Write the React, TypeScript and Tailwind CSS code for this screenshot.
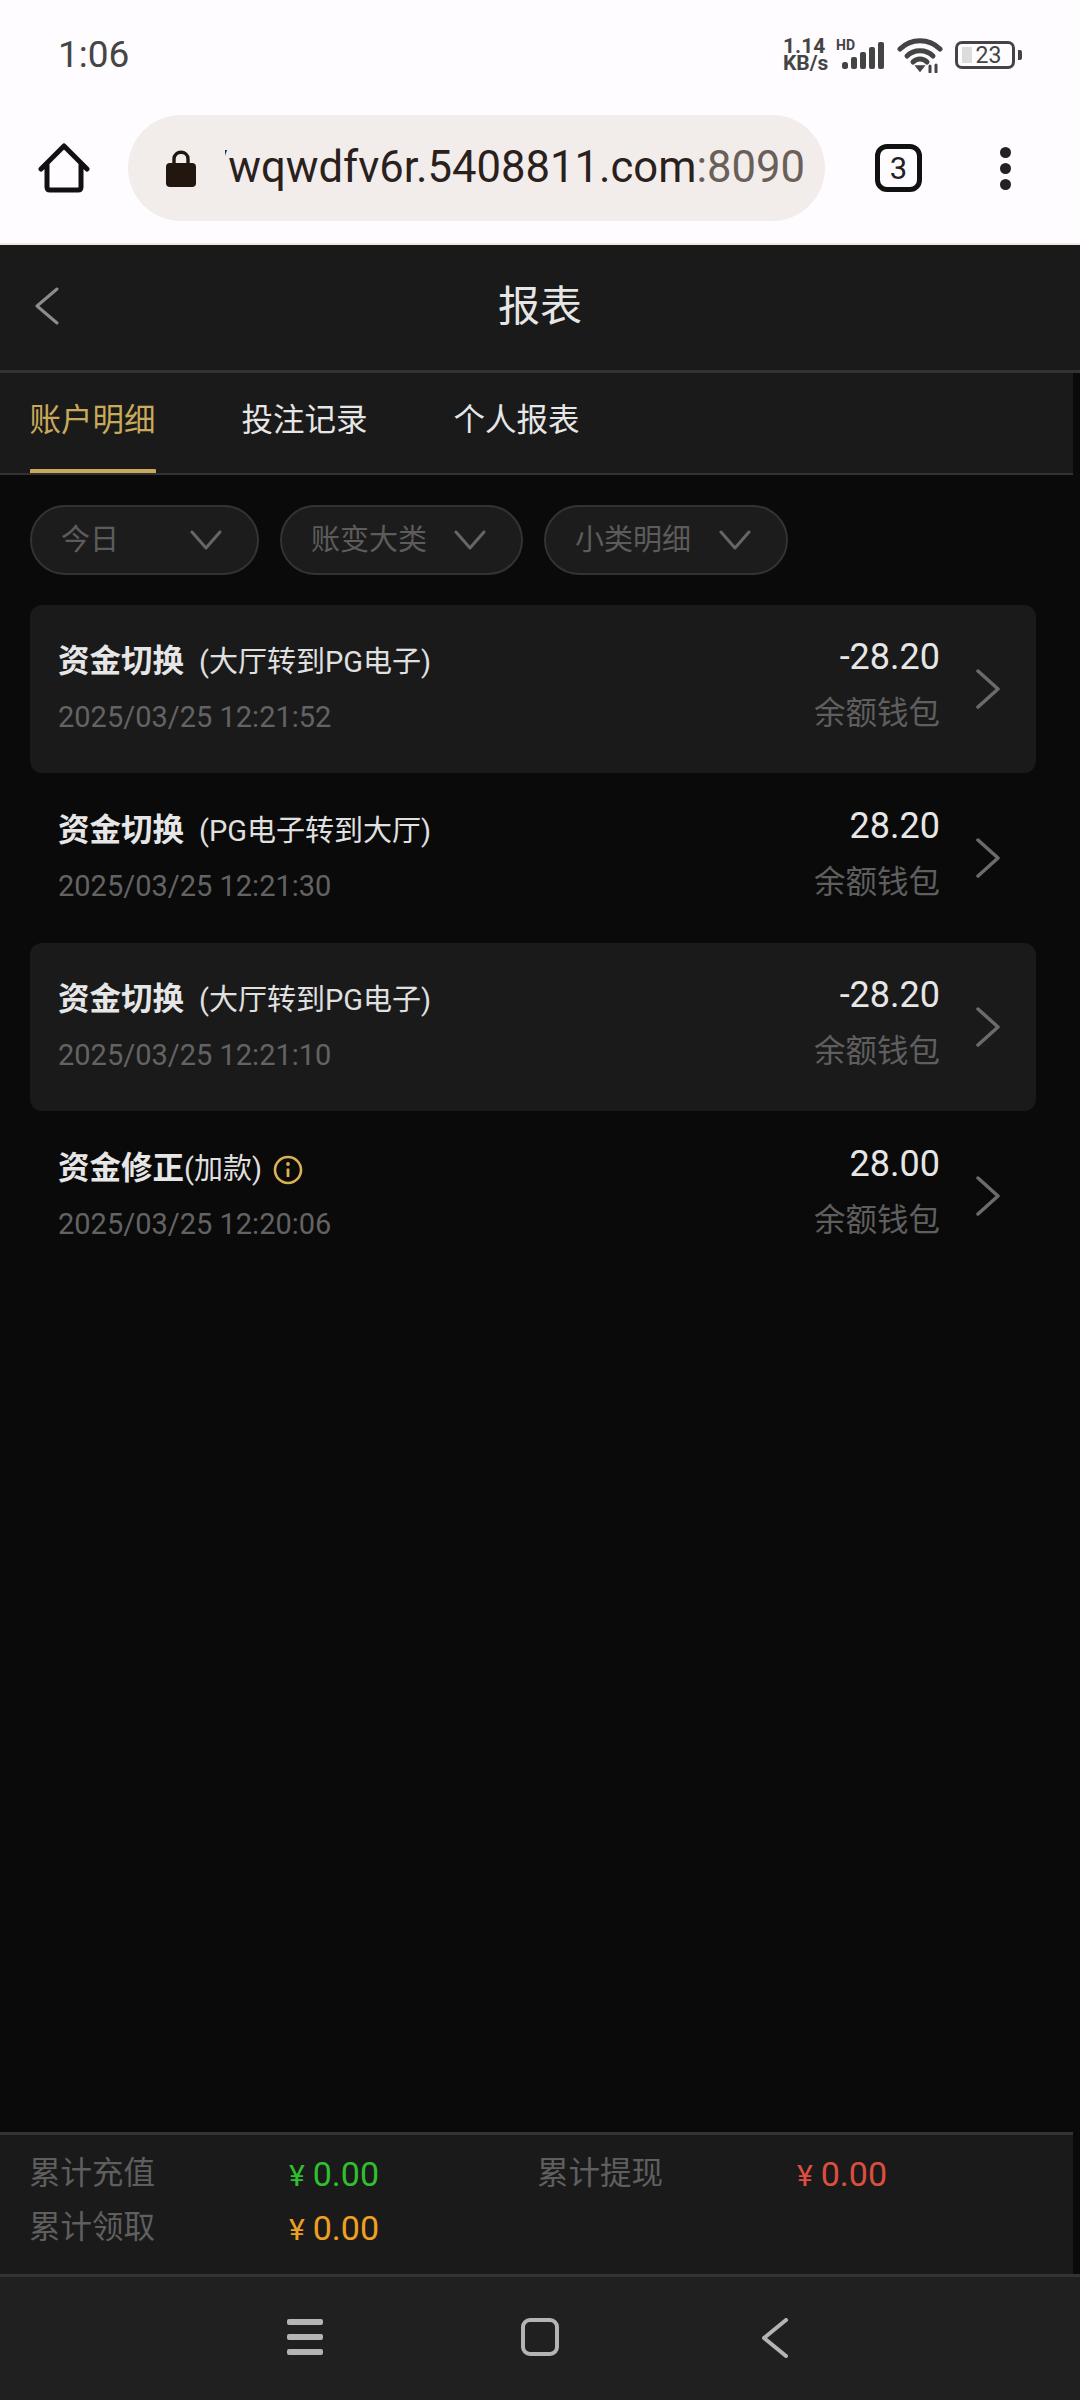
import React from "react";

const rows = [
  { t: "资金切换", s: "(大厅转到PG电子)", d: "2025/03/25 12:21:52", a: "-28.20", card: true },
  { t: "资金切换", s: "(PG电子转到大厅)", d: "2025/03/25 12:21:30", a: "28.20", card: false },
  { t: "资金切换", s: "(大厅转到PG电子)", d: "2025/03/25 12:21:10", a: "-28.20", card: true },
  { t: "资金修正", s: "(加款)", d: "2025/03/25 12:20:06", a: "28.00", card: false, info: true },
];

function Chevron({ w = 22, h = 38, dir = "right", color = "#666", sw = 3 }: { w?: number; h?: number; dir?: string; color?: string; sw?: number }) {
  const d = dir === "right" ? `M2 2 L${w - 2} ${h / 2} L2 ${h - 2}` : `M${w - 2} 2 L2 ${h / 2} L${w - 2} ${h - 2}`;
  return (
    <svg width={w} height={h} viewBox={`0 0 ${w} ${h}`} fill="none">
      <path d={d} stroke={color} strokeWidth={sw} strokeLinecap="round" strokeLinejoin="round" />
    </svg>
  );
}

function Filter({ label, w }: { label: string; w: string }) {
  return (
    <div className={`flex h-[70px] items-center justify-between rounded-[35px] border-2 border-[#333] bg-[#1c1c1c] pl-[29px] pr-[35px] ${w}`}>
      <span className="text-[29px] leading-none text-[#5c5c5c]">{label}</span>
      <svg width="32" height="20" viewBox="0 0 32 20" fill="none">
        <path d="M2 2 L16 18 L30 2" stroke="#666" strokeWidth="3" strokeLinecap="round" strokeLinejoin="round" />
      </svg>
    </div>
  );
}

function Row({ r }: { r: (typeof rows)[number] }) {
  return (
    <div className={`flex h-[168px] items-center rounded-[12px] pl-[28px] pr-[36px] ${r.card ? "bg-[#1a1a1a]" : ""}`}>
      <div className="flex flex-1 flex-col gap-[23px]">
        <div className="flex h-[33px] items-center pt-[1px]">
          <span className="text-[31.5px] font-bold leading-none text-[#e6e6e6]">{r.t}</span>
          <span className={`text-[29px] leading-none text-[#e0e0e0] ${r.info ? "" : "ml-[15px]"}`}>{r.s}</span>
          {r.info && (
            <svg className="ml-[11px] mt-[2px]" width="30" height="30" viewBox="0 0 30 30" fill="none">
              <circle cx="15" cy="15" r="13" stroke="#d9b254" strokeWidth="2.6" />
              <circle cx="15" cy="9" r="1.9" fill="#d9b254" />
              <path d="M15 13.5 V22" stroke="#d9b254" strokeWidth="2.8" />
            </svg>
          )}
        </div>
        <div className="h-[32px] text-[29px] leading-[32px] text-[#636363]">{r.d}</div>
      </div>
      <div className="mb-[8px] flex flex-col items-end gap-[21px]">
        <div className="h-[36px] text-[36px] leading-[36px] text-[#e6e6e6]">{r.a}</div>
        <div className="h-[36px] text-[31.5px] leading-[36px] text-[#5f5f5f]">余额钱包</div>
      </div>
      <div className="ml-[36px]">
        <Chevron w={24} h={40} color="#6b6b6b" sw={3.5} />
      </div>
    </div>
  );
}

function Stat({ label, value, color, w }: { label: string; value: string; color: string; w: string }) {
  return (
    <div className={`flex items-center ${w}`}>
      <span className="w-[260px] text-[31.5px] leading-none text-[#5f5f5f]">{label}</span>
      <span className={`text-[34px] leading-none ${color}`}>
        <span className="mr-[8px] text-[30px]">¥</span>
        {value}
      </span>
    </div>
  );
}

export default function App() {
  return (
    <div className="flex h-[2400px] w-[1080px] flex-col overflow-hidden bg-[#0a0a0a] font-['Roboto','Noto_Sans_CJK_SC',sans-serif]">
      <div className="shrink-0 border-b-2 border-[#f5e6df] bg-[#fefcfe]">
        <div className="flex h-[115px] items-start justify-between pl-[58px] pr-[58px] pt-[32px]">
          <span className="mt-[2px] text-[37px] leading-[42px] text-[#454545]">1:06</span>
          <div className="mt-[5px] flex items-center">
            <div className="flex w-[50px] flex-col items-start text-[#444]">
              <span className="text-[21px] font-bold leading-[17px]">1.14</span>
              <span className="text-[21px] font-bold leading-[17px]">KB/s</span>
            </div>
            <svg className="ml-[2px]" width="50" height="36" viewBox="0 0 50 36" fill="#444">
              <text x="1" y="13" fontSize="14" fontWeight="700" fontFamily="Roboto">HD</text>
              <rect x="7" y="25" width="6" height="7" rx="2.5" />
              <rect x="16" y="20" width="6" height="12" rx="2" />
              <rect x="25" y="15" width="6" height="17" rx="2" />
              <rect x="34" y="10" width="6" height="22" rx="2" />
              <rect x="43" y="5" width="6" height="27" rx="2" />
            </svg>
            <svg className="ml-[12px]" width="46" height="36" viewBox="0 0 46 36" fill="none" stroke="#444" strokeWidth="5" strokeLinecap="round">
              <path d="M3 12 C14 1 32 1 43 12" />
              <path d="M10 19 C17 12 29 12 36 19" />
              <path d="M16 25 C20 21 26 21 30 25" />
              <path d="M19 29 L23 34 L27 29 Z" fill="#444" strokeWidth="1.5" />
              <path d="M33 29 V35 M39 28 V35" strokeWidth="3" />
            </svg>
            <div className="ml-[12px] flex items-center">
              <div className="relative flex h-[28px] w-[60px] items-center justify-center rounded-[7px] border-[3px] border-[#444]">
                <div className="absolute bottom-[3px] left-[4px] top-[3px] w-[10px] bg-[#dcdcdc]" />
                <span className="relative ml-[7px] text-[23px] leading-none text-[#444]">23</span>
              </div>
              <div className="ml-[3px] h-[10px] w-[4px] rounded-r-[2px] bg-[#444]" />
            </div>
          </div>
        </div>
        <div className="flex h-[106px] items-center">
          <svg className="ml-[38px]" width="52" height="50" viewBox="0 0 52 50" fill="none">
            <path d="M3 26 L26 3 L49 26 M9 22 V44 Q9 47 12 47 H40 Q43 47 43 44 V22" stroke="#111" strokeWidth="5" strokeLinejoin="round" strokeLinecap="round" />
          </svg>
          <div className="ml-[38px] flex h-[106px] w-[697px] items-center rounded-[53px] bg-[#f2edeb] pl-[38px] pr-[20px]">
            <svg className="shrink-0" width="30" height="38" viewBox="0 0 30 38">
              <path d="M8 15 V10 C8 1 22 1 22 10 V15" fill="none" stroke="#21170f" strokeWidth="3.4" />
              <rect x="0" y="14" width="30" height="24" rx="4" fill="#21170f" />
            </svg>
            <div className="ml-[29px] flex w-[582px] justify-end overflow-hidden whitespace-nowrap text-[43.6px] leading-[60px] text-[#2a211d]">
              <span className="shrink-0">
                /wqwdfv6r.5408811.com<span className="text-[#6a5f59]">:8090</span>
              </span>
            </div>
          </div>
          <div className="ml-[50px] flex h-[48px] w-[47px] items-center justify-center rounded-[12px] border-[5px] border-[#111] text-[31px] leading-none text-[#222]">
            3
          </div>
          <div className="ml-[78px] flex flex-col gap-[5px]">
            <div className="h-[11px] w-[11px] rounded-full bg-[#222]" />
            <div className="h-[11px] w-[11px] rounded-full bg-[#222]" />
            <div className="h-[11px] w-[11px] rounded-full bg-[#222]" />
          </div>
        </div>
        <div className="h-[22px]" />
      </div>

      <div className="relative flex h-[128px] shrink-0 items-center justify-center border-b-[3px] border-[#333] bg-[#1a1a1a]">
        <div className="absolute left-[35px] top-[42px]">
          <Chevron w={24} h={38} dir="left" color="#8c8c8c" />
        </div>
        <span className="mb-[2px] text-[42px] leading-none text-[#e6e6e6]">报表</span>
      </div>

      <div className="mr-[7px] flex h-[102px] shrink-0 items-start gap-[86px] border-b-2 border-[#333] bg-[#1a1a1a] pl-[29.5px]">
        <div className="flex h-[100px] w-[126px] flex-col items-center justify-between">
          <span className="mt-[30px] text-[31.5px] leading-[36px] text-[#c9a95a]">账户明细</span>
          <div className="h-[4px] w-[126px] rounded-t-[1px] bg-[#c9a95a]" />
        </div>
        <span className="mt-[30px] text-[31.5px] leading-[36px] text-[#e6e6e6]">投注记录</span>
        <span className="mt-[30px] text-[31.5px] leading-[36px] text-[#e6e6e6]">个人报表</span>
      </div>

      <div className="flex min-h-0 flex-1 flex-col">
        <div className="flex gap-[21px] pl-[30px] pt-[30px]">
          <Filter label="今日" w="w-[229px]" />
          <Filter label="账变大类" w="w-[243px]" />
          <Filter label="小类明细" w="w-[244px]" />
        </div>
        <div className="ml-[30px] mr-[44px] mt-[30px] flex flex-col gap-[1px]">
          {rows.map((r, i) => (
            <Row key={i} r={r} />
          ))}
        </div>
      </div>

      <div className="mr-[7px] flex h-[142px] shrink-0 flex-col gap-[22px] border-t-[3px] border-[#333] bg-[#1a1a1a] pl-[29px] pt-[23px]">
        <div className="flex h-[32px]">
          <Stat label="累计充值" value="0.00" color="text-[#2fbf2f]" w="w-[508px]" />
          <Stat label="累计提现" value="0.00" color="text-[#dc4f3f]" w="w-[500px]" />
        </div>
        <div className="flex h-[32px]">
          <Stat label="累计领取" value="0.00" color="text-[#f0a020]" w="w-[508px]" />
        </div>
      </div>

      <div className="flex h-[126px] shrink-0 items-start border-t-[3px] border-[#333] bg-[#202020] pl-[287px] pt-[41px]">
        <div className="mt-[1px] flex h-[36px] w-[36px] flex-col justify-between">
          <div className="h-[6px] rounded-[2px] bg-[#b4b4b4]" />
          <div className="h-[6px] rounded-[2px] bg-[#b4b4b4]" />
          <div className="h-[6px] rounded-[2px] bg-[#b4b4b4]" />
        </div>
        <div className="ml-[198px] h-[38px] w-[38px] rounded-[9px] border-[4px] border-[#b4b4b4]" />
        <div className="ml-[203px]">
          <Chevron w={26} h={40} dir="left" color="#b4b4b4" sw={4} />
        </div>
      </div>
    </div>
  );
}
